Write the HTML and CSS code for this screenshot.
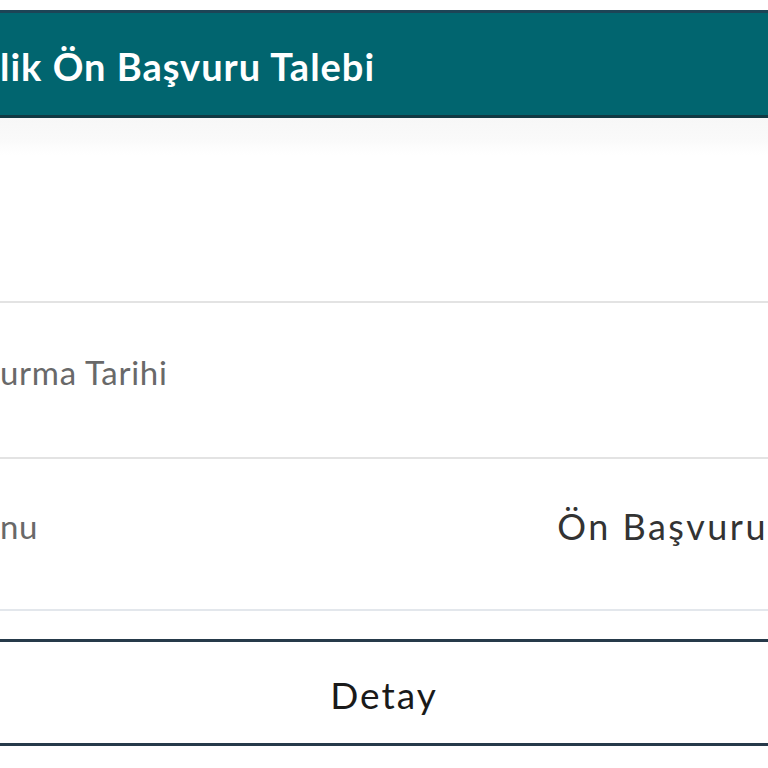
FILE: index.html
```html
<!DOCTYPE html>
<html lang="tr">
<head>
	<meta charset="utf-8">
	<title>Ön Başvuru Talebi</title>
	<link rel="stylesheet" href="styles.css">
</head>
<body>
	<div class="card">
		<div class="card-head">lik Ön Başvuru Talebi</div>
		<div class="card-band"></div>
		<div class="row row-top"></div>
		<div class="row">
			<span class="label">urma Tarihi</span>
		</div>
		<div class="row row-last">
			<span class="label">nu</span>
			<span class="value">Ön Başvuru</span>
		</div>
		<div class="actions">
			<button class="btn-detail">Detay</button>
		</div>
	</div>
</body>
</html>
```

FILE: styles.css
```css
html, body {
	margin: 0;
	padding: 0;
	background: #fff;
	overflow: hidden;
}
body {
	font-family: Lato, "Open Sans", sans-serif;
	width: 768px;
	height: 768px;
}
.card {
	padding-top: 10px;
}
.card-head {
	height: 108px;
	box-sizing: border-box;
	display: flex;
	align-items: center;
	padding-top: 3px;
	background: #01656f;
	border-top: 3px solid #1d4456;
	border-bottom: 3px solid #113943;
	color: #fff;
	font-size: 38px;
	font-weight: 700;
	letter-spacing: 1px;
	white-space: nowrap;
}
.card-band {
	height: 37px;
	background: linear-gradient(#f7f7f7, #fafafa 60%, #fff);
}
.row {
	display: flex;
	align-items: center;
	justify-content: space-between;
	height: 156px;
	box-sizing: border-box;
	padding-bottom: 16px;
	border-bottom: 2px solid #e3e3e3;
	white-space: nowrap;
}
.row-top {
	height: 148px;
}
.row-last {
	height: 152px;
	border-bottom-color: #e3e7ec;
}
.label {
	color: #696969;
	font-size: 33px;
	letter-spacing: 0.7px;
}
.value {
	color: #333;
	font-size: 36px;
	letter-spacing: 2.5px;
}
.actions {
	padding-top: 28px;
}
.btn-detail {
	display: block;
	width: 100%;
	height: 107px;
	margin: 0;
	padding: 4px 0 0;
	background: #fff;
	border: none;
	border-top: 3px solid #263a4a;
	border-bottom: 3px solid #263a4a;
	color: #1a1a1a;
	font-family: inherit;
	font-size: 37px;
	letter-spacing: 2px;
}
```
